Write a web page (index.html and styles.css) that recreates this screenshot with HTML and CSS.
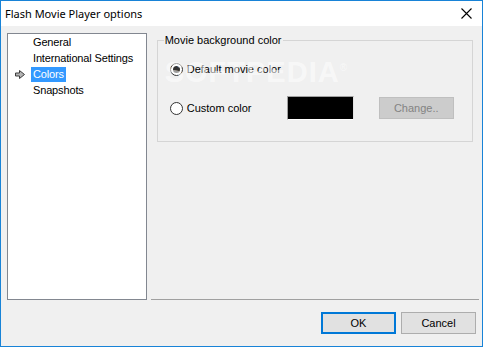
FILE: index.html
```html
<!DOCTYPE html>
<html lang="en">
<head>
  <meta charset="UTF-8" />
  <title>Flash Movie Player options</title>
  <link rel="stylesheet" href="styles.css">
</head>
<body>
  <div class="window">
    <div class="titlebar">
      <span class="title">Flash Movie Player options</span>
      <svg class="close" width="11" height="11" viewBox="0 0 11 11">
        <path d="M0.5 0.5 L10.5 10.5 M10.5 0.5 L0.5 10.5" stroke="#000" stroke-width="1.1" fill="none" />
      </svg>
    </div>

    <div class="content">
      <!-- Pages tree -->
      <ul class="tree">
        <li><span class="label">General</span></li>
        <li><span class="label">International Settings</span></li>
        <li class="current">
          <svg class="arrow" width="10" height="9" viewBox="0 0 10 9">
            <polygon points="0.5,3 4.5,3 4.5,0.5 9.5,4.5 4.5,8.5 4.5,6 0.5,6" fill="#b4b4b4" stroke="#3c3c3c" stroke-width="1" />
          </svg>
          <span class="label selected">Colors</span>
        </li>
        <li><span class="label">Snapshots</span></li>
      </ul>

      <!-- Page -->
      <div class="page">
        <fieldset class="group">
          <legend>Movie background color</legend>
          <div class="row">
            <label class="option"><span class="radio checked"></span>Default movie color</label>
          </div>
          <div class="row">
            <label class="option"><span class="radio"></span>Custom color</label>
            <div class="swatch"></div>
            <button class="btn disabled" disabled>Change..</button>
          </div>
        </fieldset>
        <div class="watermark">SOFTPEDIA<sup>®</sup></div>
      </div>
    </div>

    <div class="footer">
      <button class="btn default">OK</button>
      <button class="btn">Cancel</button>
    </div>
  </div>
</body>
</html>
```

FILE: styles.css
```css
* {
  margin: 0;
  padding: 0;
  box-sizing: border-box;
}

body {
  background: #f0f0f0;
  font-family: "Liberation Sans", Arial, sans-serif;
  font-size: 11px;
  color: #000;
}

.window {
  width: 483px;
  height: 347px;
  border: 1px solid #1883d7;
  background: #f0f0f0;
  display: flex;
  flex-direction: column;
}

.titlebar {
  height: 25px;
  background: #fff;
  display: flex;
  align-items: center;
  justify-content: space-between;
  padding: 0 10px 0 4px;
}

.title {
  font-family: "Noto Sans", sans-serif;
  font-size: 11px;
}

.content {
  display: flex;
  padding: 7px 3px 0 6px;
}

.tree {
  list-style: none;
  width: 140px;
  height: 267px;
  background: #fff;
  border: 1px solid #828790;
}

.tree li {
  height: 16px;
  display: flex;
  align-items: center;
  padding-left: 23px;
  position: relative;
}

.tree .label {
  padding: 0 2px;
  line-height: 15px;
  letter-spacing: -0.15px;
}

.tree .selected {
  background: #3399ff;
  color: #fff;
}

.arrow {
  position: absolute;
  left: 7px;
  top: 4px;
}

.page {
  width: 329px;
  height: 267px;
  margin-left: 4px;
  padding: 1px 6px 0 6px;
  border-bottom: 1px solid #a0a0a0;
  position: relative;
}

.group {
  border: 1px solid #d5d5d5;
  height: 108px;
  padding: 0 0 0 12px;
}

.group legend {
  margin-left: -6px;
  padding: 0 1px;
  line-height: 13px;
}

.row {
  display: flex;
  align-items: center;
  height: 24px;
}

.row + .row {
  margin-top: 15px;
}

.group .row:first-of-type {
  margin-top: 10px;
}

.option {
  display: flex;
  align-items: center;
  width: 117px;
}

.radio {
  width: 13px;
  height: 13px;
  border: 1px solid #333;
  border-radius: 50%;
  background: #fff;
  margin-right: 4px;
  display: flex;
  align-items: center;
  justify-content: center;
}

.radio.checked::after {
  content: "";
  width: 7px;
  height: 7px;
  border-radius: 50%;
  background: #333;
}

.swatch {
  width: 67px;
  height: 24px;
  background: #000;
  border: 1px solid #a0a0a0;
  border-right-color: #e3e3e3;
  border-bottom-color: #fff;
}

.btn {
  width: 75px;
  height: 22px;
  background: #e1e1e1;
  border: 1px solid #adadad;
  font-family: "Liberation Sans", Arial, sans-serif;
  font-size: 11px;
  color: #000;
}

.btn.disabled {
  margin-left: 25px;
  background: #cccccc;
  border-color: #bfbfbf;
  color: #838383;
}

.btn.default {
  border: 2px solid #0078d7;
}

.footer {
  display: flex;
  justify-content: flex-end;
  gap: 5px;
  padding: 12px 6px 0 0;
}

.watermark {
  position: absolute;
  left: 14px;
  top: 23px;
  font-family: "Liberation Sans", Arial, sans-serif;
  font-weight: bold;
  font-size: 29px;
  letter-spacing: 1px;
  color: rgba(255, 255, 255, 0.55);
  pointer-events: none;
}

.watermark sup {
  font-size: 10px;
  font-weight: normal;
}
```
